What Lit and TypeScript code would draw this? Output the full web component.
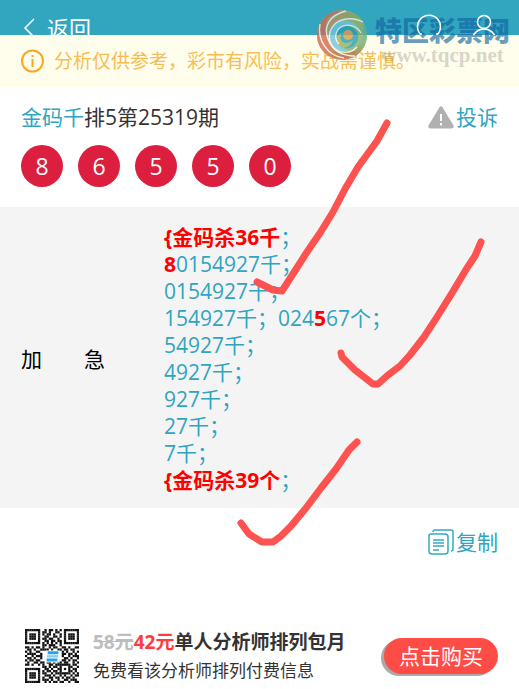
import { LitElement, html, css, svg } from "lit";
import { customElement } from "lit/decorators.js";

type Part = { text: string; hot?: boolean };

const LINES: Part[][] = [
  [{ text: "{金码杀36千", hot: true }, { text: "；" }],
  [{ text: "8", hot: true }, { text: "0154927千；" }],
  [{ text: "0154927千；" }],
  [{ text: "154927千；024" }, { text: "5", hot: true }, { text: "67个；" }],
  [{ text: "54927千；" }],
  [{ text: "4927千；" }],
  [{ text: "927千；" }],
  [{ text: "27千；" }],
  [{ text: "7千；" }],
  [{ text: "{金码杀39个", hot: true }, { text: "；" }],
];

const QR_ROWS = [
  "1111111001011010101111111",
  "1000001011010011001000001",
  "1011101010110100101011101",
  "1011101001100110101011101",
  "1011101011011001001011101",
  "1000001001101101101000001",
  "1111111010101010101111111",
  "0000000011011100100000000",
  "1101011010010110011010011",
  "0110100111101001101101100",
  "1010011000000000010100101",
  "0111100100000000011011010",
  "1001011100000000010010111",
  "0110100100000000001101001",
  "1011011000000000011010110",
  "0100110110110101101100101",
  "1101001010011011111110110",
  "0000000011010110100011001",
  "1111111001101001101010110",
  "1000001010110110100011010",
  "1011101011001011111110101",
  "1011101001110100101001011",
  "1011101010011011010110100",
  "1000001011101001001101110",
  "1111111001010110110010011",
];

@customElement("qr-mark")
class QrMark extends LitElement {
  static styles = css`
    :host { display: block; width: 54px; height: 54px; }
    svg { display: block; width: 100%; height: 100%; }
  `;
  render() {
    return html`<svg viewBox="0 0 25 25" role="img" aria-label="QR">
      ${QR_ROWS.map((row, y) =>
        [...row].map((c, x) => (c === "1" ? svg`<rect x=${x} y=${y} width="1.04" height="1.04" fill="#111" />` : null))
      )}
      <rect x="9.500" y="10" width="6.500" height="5.500" fill="#fff" />
      <path d="M10.500 10.300h5v1.400h-5zM10 13.700h5v1.400h-5z" fill="#1fa5ee" />
      <path d="M10.200 12.100h5.200v1.100h-5.200z" fill="#8fccea" />
    </svg>`;
  }
}

@customElement("site-mark")
class SiteMark extends LitElement {
  static styles = css`
    :host { display: flex; gap: 7px; pointer-events: none; }
    .ball { width: 52px; height: 52px; margin-top: 9px; opacity: 0.8; flex: none; }
    .words { display: flex; flex-direction: column; align-items: center; padding-top: 14px; }
    .name { font-size: 27px; line-height: 34px; font-weight: 900; color: rgba(14, 100, 160, 0.65); white-space: nowrap; }
    .url { font: bold 21px/14px "Liberation Serif", serif; color: rgba(150, 150, 150, 0.4); }
  `;
  render() {
    return html`
      <svg class="ball" viewBox="0 0 52 52" aria-hidden="true">
        <defs>
          <linearGradient id="rim" x1="0" y1="0" x2="1" y2="1">
            <stop offset="0" stop-color="#cf8a6c" /><stop offset=".5" stop-color="#a4b05a" /><stop offset="1" stop-color="#5fae7c" />
          </linearGradient>
          <linearGradient id="side" x1="0" y1="0" x2="0" y2="1">
            <stop offset="0" stop-color="#3fb2c4" /><stop offset=".6" stop-color="#6fae6a" /><stop offset="1" stop-color="#b4603c" />
          </linearGradient>
          <linearGradient id="top" x1="0" y1="0" x2="1" y2="0">
            <stop offset="0" stop-color="#c98a62" /><stop offset="1" stop-color="#7fb04a" />
          </linearGradient>
        </defs>
        <circle cx="26" cy="26" r="25" fill="url(#rim)" />
        <path d="M2 20C6 6 18 0 30 2 18 6 11 15 13 27c2 12 12 20 26 20C22 57-4 44 2 20z" fill="#d0694e" />
        <path d="M12 9C24 0 40 2 47 13c-8-4-17-4-24 0-8 4-11 11-10 18C8 24 8 15 12 9z" fill="url(#top)" />
        <path d="M47 13c7 12 4 27-8 34-9 4-19 1-23-8 8 5 19 5 25-1 7-7 8-17 6-25z" fill="url(#side)" />
        <path d="M13 31c-2-9 3-17 11-19 9-2 19 3 21 12-4-6-11-9-17-7-7 2-10 8-8 14 2 7 9 11 16 9-9 5-21 1-23-9z" fill="#72c2d8" />
        <path d="M20 30c-2-7 3-13 10-13 8 0 13 6 12 13-2 7-8 11-14 9 5-1 8-4 9-8-4 4-10 4-12 0-1-3 0-6 3-7-4 0-7 2-8 6z" fill="#239fb4" />
        <circle cx="32" cy="26" r="5" fill="#dc9c4c" />
        <g fill="none" stroke="#f8f4e8" stroke-width="1.400">
          <path d="M30 2C14 6 7 17 12 30c4 11 13 17 27 17" />
          <path d="M47 13C38 8 27 9 20 14c-8 7-9 18-2 25 6 6 17 6 23-1" />
          <path d="M4 15C1 32 12 47 28 49" />
          <path d="M45 24c-4-7-13-10-20-6-6 4-7 12-2 17" />
        </g>
      </svg>
      <div class="words"><span class="name">特区彩票网</span><span class="url">www.tqcp.net</span></div>
    `;
  }
}

@customElement("app-root")
class AppRoot extends LitElement {
  static styles = css`
    :host {
      display: block;
      position: relative;
      overflow: hidden;
      background: #fff;
      color: #333;
      font: 21px/28px "Open Sans", "Noto Sans CJK SC", sans-serif;
    }
    svg { display: block; flex: none; }
    a { color: #30a5bf; text-decoration: none; }
    button { font: inherit; border: 0; padding: 0; background: none; color: inherit; cursor: pointer; }
    .top { height: 35px; overflow: hidden; background: #32a5bf; }
    .bar { display: flex; justify-content: space-between; height: 56px; padding: 0 21px; align-items: center; }
    .back { display: flex; align-items: center; gap: 10px; color: #fff; font-size: 22px; }
    .tools { display: flex; align-items: center; gap: 28px; position: relative; z-index: 2; }
    .notice {
      display: flex; align-items: center; gap: 10px;
      height: 52px; padding: 0 21px;
      background: #fffdeb; color: #f7bd55; font-size: 19px; white-space: nowrap;
    }
    .issue { padding: 16px 21px 20px; }
    .row { display: flex; justify-content: space-between; align-items: center; }
    .title { margin: 0; font-size: inherit; font-weight: normal; }
    .link { display: flex; align-items: center; gap: 2px; color: #30a5bf; }
    .balls { display: flex; gap: 15px; margin: 14px 0 0; padding: 0; list-style: none; }
    .num {
      width: 42px; height: 42px; border-radius: 50%;
      background: #dc1f3e; color: #fff; font-size: 23px; line-height: 42px; text-align: center;
    }
    .plan {
      display: grid; grid-template-columns: 143px 1fr; align-items: center;
      padding: 17px 21px 14px; background: #f4f4f4; line-height: 27px;
    }
    .kind { color: #000; white-space: nowrap; }
    .lines { color: #30a5bf; white-space: nowrap; }
    .hot { color: #f00; font-weight: bold; }
    .copy { display: flex; justify-content: flex-end; padding: 20px 21px 0; }
    .offer { display: flex; align-items: center; gap: 14px; padding: 71px 21px 7px 25px; }
    .text { flex: 1; white-space: nowrap; }
    .deal { font-size: 19px; font-weight: bold; line-height: 30px; }
    .old { color: #bdbdbd; }
    .now { color: #ff3b3b; }
    .desc { font-size: 17px; line-height: 28px; }
    .buy {
      width: 114px; height: 36px; border-radius: 18px; line-height: 36px;
      background: #ff4c46; color: #fff; box-shadow: -3px 2px 0 #aaa;
    }
    .mark { position: absolute; top: 0; right: 9px; }
    .ticks { position: absolute; top: 0; left: 0; pointer-events: none; }
  `;

  render() {
    return html`
      <header class="top">
        <div class="bar">
          <a class="back" href="#">
            <svg width="16" height="22" viewBox="0 0 16 22" fill="none" stroke="#fff" stroke-width="1.500"><path d="M13 2 4 11l9 9" /></svg>
            返回
          </a>
          <div class="tools">
            <svg width="26" height="28" viewBox="0 0 26 28" fill="none" stroke="#fff" stroke-width="1.500"><path d="M5 21a11.500 11.500 0 1 1 16 0M5 19v6M21 19v6" /></svg>
            <svg width="28" height="28" viewBox="0 0 28 28" fill="none" stroke="#fff" stroke-width="1.500"><circle cx="14" cy="8" r="6.500" /><path d="M2 26c1-7 6-11 12-11s11 4 12 11" /></svg>
          </div>
        </div>
      </header>
      <div class="notice">
        <svg width="23" height="24" viewBox="0 0 23 24" fill="none" stroke="#fba61f" stroke-width="2"><circle cx="11.500" cy="12" r="10.500" /><path d="M11.500 10v8M11.500 6v2" /></svg>
        分析仅供参考，彩市有风险，实战需谨慎。
      </div>
      <section class="issue">
        <div class="row">
          <h1 class="title"><a href="#">金码千</a>排5第25319期</h1>
          <a class="link" href="#">
            <svg width="26" height="23" viewBox="0 0 26 23"><path d="M11.500 1.300q1.500-2 3 0L25.500 19.500q1 3-2 3h-21q-3 0-2-3z" fill="#b0b0b0" /><path d="M13 8v7M13 17v2.500" stroke="#fff" stroke-width="2" /></svg>
            投诉
          </a>
        </div>
        <ul class="balls">${[8, 6, 5, 5, 0].map((n) => html`<li class="num">${n}</li>`)}</ul>
      </section>
      <section class="plan">
        <div class="kind">加　　急</div>
        <div class="lines">
          ${LINES.map((line) => html`<div>${line.map((p) => (p.hot ? html`<span class="hot">${p.text}</span>` : p.text))}</div>`)}
        </div>
      </section>
      <div class="copy">
        <button class="link">
          <svg width="26" height="26" viewBox="0 0 26 26" fill="none" stroke="#35a9c2" stroke-width="1.500"><path d="M5 3q0-2 2-2h16q2 0 2 2v17q0 2-2 2" /><path d="M3 5h14q3 0 3 3v14q0 3-3 3H4q-3 0-3-3V7q0-2 2-2z" /><path d="M5 11h11M5 14h11M5 17h11M5 21h6" /></svg>
          复制
        </button>
      </div>
      <footer class="offer">
        <qr-mark></qr-mark>
        <div class="text">
          <div class="deal"><s class="old">58元</s><span class="now">42元</span>单人分析师排列包月</div>
          <div class="desc">免费看该分析师排列付费信息</div>
        </div>
        <button class="buy">点击购买</button>
      </footer>
      <site-mark class="mark"></site-mark>
      <svg class="ticks" width="519" height="560" viewBox="0 0 519 560" fill="none" stroke="#fd524f" stroke-width="7" stroke-linecap="round" stroke-linejoin="round" aria-hidden="true">
        <path d="M387 123L377 141 358 167 345 189 333 212 320 233 307 252 291 277 282 291 273 290 257 282" />
        <path d="M481 242L475 256 467 268 452 293 437 317 424 337 410 355 400 366 388 375 378 384H373L355 370 342 357 341 353" />
        <path d="M357 442L349 450 336 469 321 488 306 508 291 526 281 536 273 542H262L249 534 241 523" />
      </svg>
    `;
  }
}
